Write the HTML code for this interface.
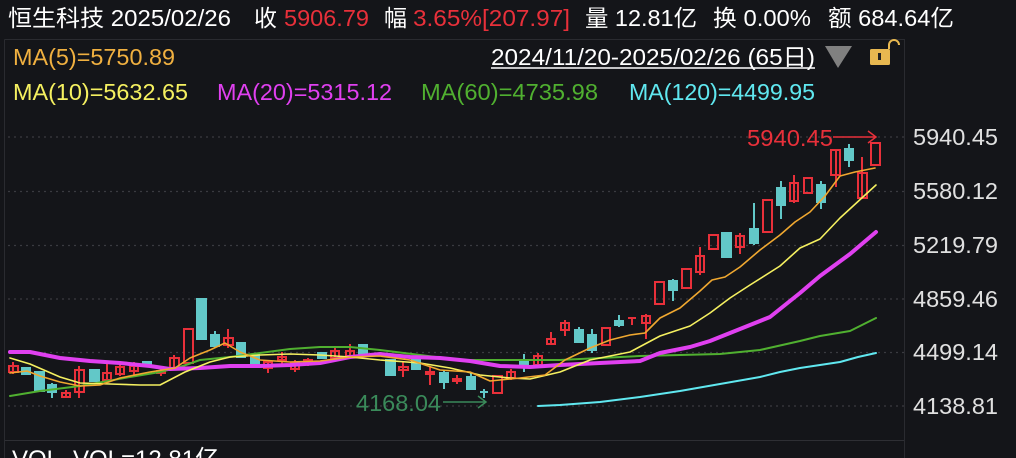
<!DOCTYPE html>
<html><head><meta charset="utf-8"><style>
html,body{margin:0;padding:0;background:#141519;width:1016px;height:458px;overflow:hidden}
svg{display:block}
text{font-family:"Liberation Sans","Noto Sans CJK SC",sans-serif}
</style></head><body>
<svg width="1016" height="458" viewBox="0 0 1016 458">
<rect width="1016" height="458" fill="#141519"/>
<g font-size="23" lengthAdjust="spacingAndGlyphs">
<text x="8" y="26" fill="#fff" textLength="223" lengthAdjust="spacingAndGlyphs">恒生科技 2025/02/26</text>
<text x="254" y="26" fill="#fff">收</text>
<text x="284" y="26" fill="#e8303a" textLength="85" lengthAdjust="spacingAndGlyphs">5906.79</text>
<text x="384" y="26" fill="#fff">幅</text>
<text x="413" y="26" fill="#e8303a" textLength="157" lengthAdjust="spacingAndGlyphs">3.65%[207.97]</text>
<text x="585" y="26" fill="#fff" textLength="112" lengthAdjust="spacingAndGlyphs">量 12.81亿</text>
<text x="713" y="26" fill="#fff" textLength="98" lengthAdjust="spacingAndGlyphs">换 0.00%</text>
<text x="828" y="26" fill="#fff" textLength="126" lengthAdjust="spacingAndGlyphs">额 684.64亿</text>
</g>
<!-- frame -->
<path d="M4.5 39.5H904.5V458M4.5 39.5V458" fill="none" stroke="#2a2b30"/>
<line x1="5" y1="440.5" x2="904" y2="440.5" stroke="#2e2f34"/>
<g stroke="#3a3b40" stroke-dasharray="2 4" stroke-width="1.3">
<line x1="8" y1="137" x2="904" y2="137"/><line x1="8" y1="191.5" x2="904" y2="191.5"/>
<line x1="8" y1="245.5" x2="904" y2="245.5"/><line x1="8" y1="299" x2="904" y2="299"/>
<line x1="8" y1="352.5" x2="904" y2="352.5"/><line x1="8" y1="406" x2="904" y2="406"/>
</g>
<g font-size="23">
<text x="13" y="65" fill="#f0b040" textLength="162" lengthAdjust="spacingAndGlyphs">MA(5)=5750.89</text>
<text x="491" y="65" fill="#fff" textLength="324" lengthAdjust="spacingAndGlyphs">2024/11/20-2025/02/26 (65日)</text>
<text x="13" y="100" fill="#f5f060" textLength="175" lengthAdjust="spacingAndGlyphs">MA(10)=5632.65</text>
<text x="217" y="100" fill="#e040f0" textLength="175" lengthAdjust="spacingAndGlyphs">MA(20)=5315.12</text>
<text x="421" y="100" fill="#50b030" textLength="177" lengthAdjust="spacingAndGlyphs">MA(60)=4735.98</text>
<text x="629" y="100" fill="#60e8f0" textLength="186" lengthAdjust="spacingAndGlyphs">MA(120)=4499.95</text>
</g>
<line x1="491" y1="68" x2="815" y2="68" stroke="#fff" stroke-width="1.5"/>
<polygon points="825,46 852,46 838,68" fill="#808080"/>
<rect x="870" y="49" width="20" height="16" rx="1.5" fill="#e8b850"/>
<rect x="878" y="53" width="3" height="7" fill="#222"/>
<path d="M889 49V45a5 5 0 0 1 10 0" fill="none" stroke="#e8b850" stroke-width="2"/>
<g font-size="23" fill="#e0e0e0">
<text x="913" y="145" textLength="85" lengthAdjust="spacingAndGlyphs">5940.45</text><text x="913" y="199" textLength="85" lengthAdjust="spacingAndGlyphs">5580.12</text>
<text x="913" y="253" textLength="85" lengthAdjust="spacingAndGlyphs">5219.79</text><text x="913" y="307" textLength="85" lengthAdjust="spacingAndGlyphs">4859.46</text>
<text x="913" y="360" textLength="85" lengthAdjust="spacingAndGlyphs">4499.14</text><text x="913" y="414" textLength="85" lengthAdjust="spacingAndGlyphs">4138.81</text>
</g>
<!-- candles -->
<g id="c" stroke-width="2">
<g stroke="#e8303a" fill="none">
<path d="M13 362V374"/><rect x="9" y="366" width="9" height="6"/>
<path d="M66 390V398"/><rect x="62" y="393" width="8" height="4"/>
<path d="M79 366V398"/><rect x="75" y="370" width="9" height="22"/>
<path d="M107 364V380"/><rect x="103" y="373" width="8" height="7"/>
<path d="M120 362V376"/><rect x="116" y="367" width="8" height="7"/>
<path d="M134 362V376"/><rect x="130" y="366" width="8" height="5"/>
<path d="M161 368V376"/><rect x="157" y="371" width="8" height="2"/>
<path d="M174 355V370"/><rect x="170" y="358" width="9" height="10"/>
<rect x="184" y="329" width="9" height="34"/>
<path d="M228 329V348"/><rect x="224" y="338" width="9" height="7"/>
<path d="M268 360V373"/><rect x="264" y="362" width="8" height="6"/>
<path d="M282 352V364"/><rect x="278" y="357" width="8" height="3"/>
<path d="M295 360V372"/><rect x="291" y="363" width="8" height="6"/>
<path d="M308 358V366"/><rect x="304" y="360" width="8" height="2"/>
<path d="M335 348V360"/><rect x="331" y="351" width="8" height="7"/>
<path d="M350 344V358"/><rect x="346" y="351" width="8" height="5"/>
<path d="M403 362V377"/><rect x="399" y="367" width="9" height="3"/>
<path d="M430 366V385"/><rect x="426" y="372" width="8" height="2"/>
<path d="M457 375V384"/><rect x="453" y="379" width="8" height="2"/>
<rect x="493" y="376" width="9" height="17"/>
<path d="M511 369V380"/><rect x="507" y="372" width="8" height="6"/>
<path d="M538 353V366"/><rect x="534" y="356" width="8" height="9"/>
<path d="M551 332V344"/><rect x="547" y="339" width="8" height="5"/>
<path d="M565 320V336"/><rect x="561" y="323" width="8" height="7"/>
<rect x="602" y="328" width="8" height="17"/>
<path d="M632 318V325M628 318H636"/>
<path d="M646 314V339"/><rect x="642" y="316" width="8" height="7"/>
<rect x="655" y="282" width="9" height="22"/>
<rect x="682" y="269" width="9" height="19"/>
<path d="M700 247V275"/><rect x="696" y="256" width="8" height="16"/>
<rect x="709" y="235" width="9" height="14"/>
<path d="M740 233V254"/><rect x="736" y="236" width="8" height="11"/>
<rect x="763" y="200" width="9" height="32"/>
<path d="M794 175V203"/><rect x="790" y="183" width="8" height="18"/>
<rect x="804" y="178" width="8" height="15"/>
<path d="M836 150V187"/><rect x="831" y="150" width="9" height="25"/>
<path d="M862 157V198"/><rect x="858" y="173" width="9" height="25"/>
<rect x="871" y="143" width="9" height="22"/>
</g>
<g fill="#62c8c8" stroke="#62c8c8">
<rect x="22" y="368" width="8" height="6"/>
<rect x="35" y="372" width="9" height="19"/>
<path d="M52 383V398"/><rect x="48" y="385" width="8" height="7"/>
<rect x="90" y="370" width="9" height="11"/>
<rect x="143" y="362" width="8" height="4"/>
<rect x="197" y="299" width="9" height="40"/>
<path d="M215 331V348"/><rect x="211" y="335" width="8" height="11"/>
<rect x="237" y="343" width="8" height="14"/>
<rect x="251" y="355" width="8" height="12"/>
<rect x="318" y="353" width="8" height="5"/>
<rect x="359" y="345" width="8" height="10"/>
<rect x="386" y="360" width="9" height="15"/>
<rect x="412" y="360" width="8" height="9"/>
<path d="M444 370V389"/><rect x="440" y="373" width="8" height="9"/>
<path d="M471 373V390"/><rect x="467" y="377" width="8" height="12"/>
<path d="M484 389V398M480 392H488" fill="none"/>
<path d="M524 354V372"/><rect x="520" y="362" width="8" height="4"/>
<path d="M579 327V343"/><rect x="575" y="330" width="8" height="12"/>
<path d="M592 329V353"/><rect x="588" y="335" width="8" height="15"/>
<path d="M619 315V327"/><rect x="615" y="321" width="8" height="4"/>
<path d="M673 279V301"/><rect x="669" y="281" width="8" height="9"/>
<rect x="722" y="233" width="9" height="24"/>
<path d="M754 203V245"/><rect x="750" y="229" width="8" height="14"/>
<path d="M781 181V219"/><rect x="777" y="188" width="8" height="17"/>
<path d="M821 181V209"/><rect x="817" y="185" width="8" height="17"/>
<path d="M849 144V167"/><rect x="845" y="149" width="8" height="11"/>
</g>
</g>
<!-- MAs -->
<g fill="none" stroke-linejoin="round" stroke-linecap="round">
<polyline stroke="#60e8f0" stroke-width="2" points="538,406 560,405 600,402 640,397 680,391 720,384 760,377 780,372 800,368 820,365 840,362 858,357 876,353"/>
<polyline stroke="#50b030" stroke-width="2" points="10,396 40,391 80,386 130,377 160,372 180,367 200,360 230,357 260,353 290,349 320,347 350,347 380,350 420,355 460,360 500,360 560,360 600,358 640,356 680,355 720,354 760,350 800,341 820,336 850,331 876,318"/>
<polyline stroke="#e040f0" stroke-width="4" points="10,352 30,352 60,358 90,361 120,363 150,366 170,369 200,368 230,366 260,366 290,365 320,363 350,357 380,354 410,357 440,358 470,361 500,366 530,367 560,365 600,363 640,361 660,353 690,347 710,341 740,329 770,317 800,293 820,276 850,254 876,232"/>
<polyline stroke="#f5f060" stroke-width="1.6" points="10,358 30,364 60,377 80,383 110,384 140,385 160,385 185,372 210,362 230,357 260,355 290,354 320,355 350,357 380,360 420,363 450,368 480,375 510,378 530,379 560,372 590,360 630,352 660,336 690,326 710,313 730,298 750,285 780,266 800,248 820,239 840,218 876,185"/>
<polyline stroke="#f0a830" stroke-width="1.6" points="10,373 27,371 40,376 60,382 80,386 100,385 120,378 150,372 175,368 190,358 210,350 225,343 240,352 260,360 290,362 320,361 350,357 380,356 410,360 440,370 470,372 490,381 520,378 545,375 565,360 590,348 610,340 630,335 645,333 660,318 680,308 700,291 712,280 725,277 740,267 760,250 780,235 795,222 810,212 825,196 840,176 855,172 875,168"/>
</g>
<text x="747" y="146" font-size="23" fill="#e8303a" textLength="86" lengthAdjust="spacingAndGlyphs">5940.45</text>
<path d="M833 137H876M868 131L876 137L868 143" fill="none" stroke="#e8303a" stroke-width="1.5"/>
<text x="356" y="411" font-size="23" fill="#3a8a5a" textLength="85" lengthAdjust="spacingAndGlyphs">4168.04</text>
<path d="M443 402H486M478 396L486 402L478 408" fill="none" stroke="#3a8a5a" stroke-width="1.5"/>
<text x="12" y="467" font-size="24" fill="#fff">VOL</text>
<text x="73" y="467" font-size="24" fill="#fff">VOL=12.81亿</text>
</svg>
</body></html>
